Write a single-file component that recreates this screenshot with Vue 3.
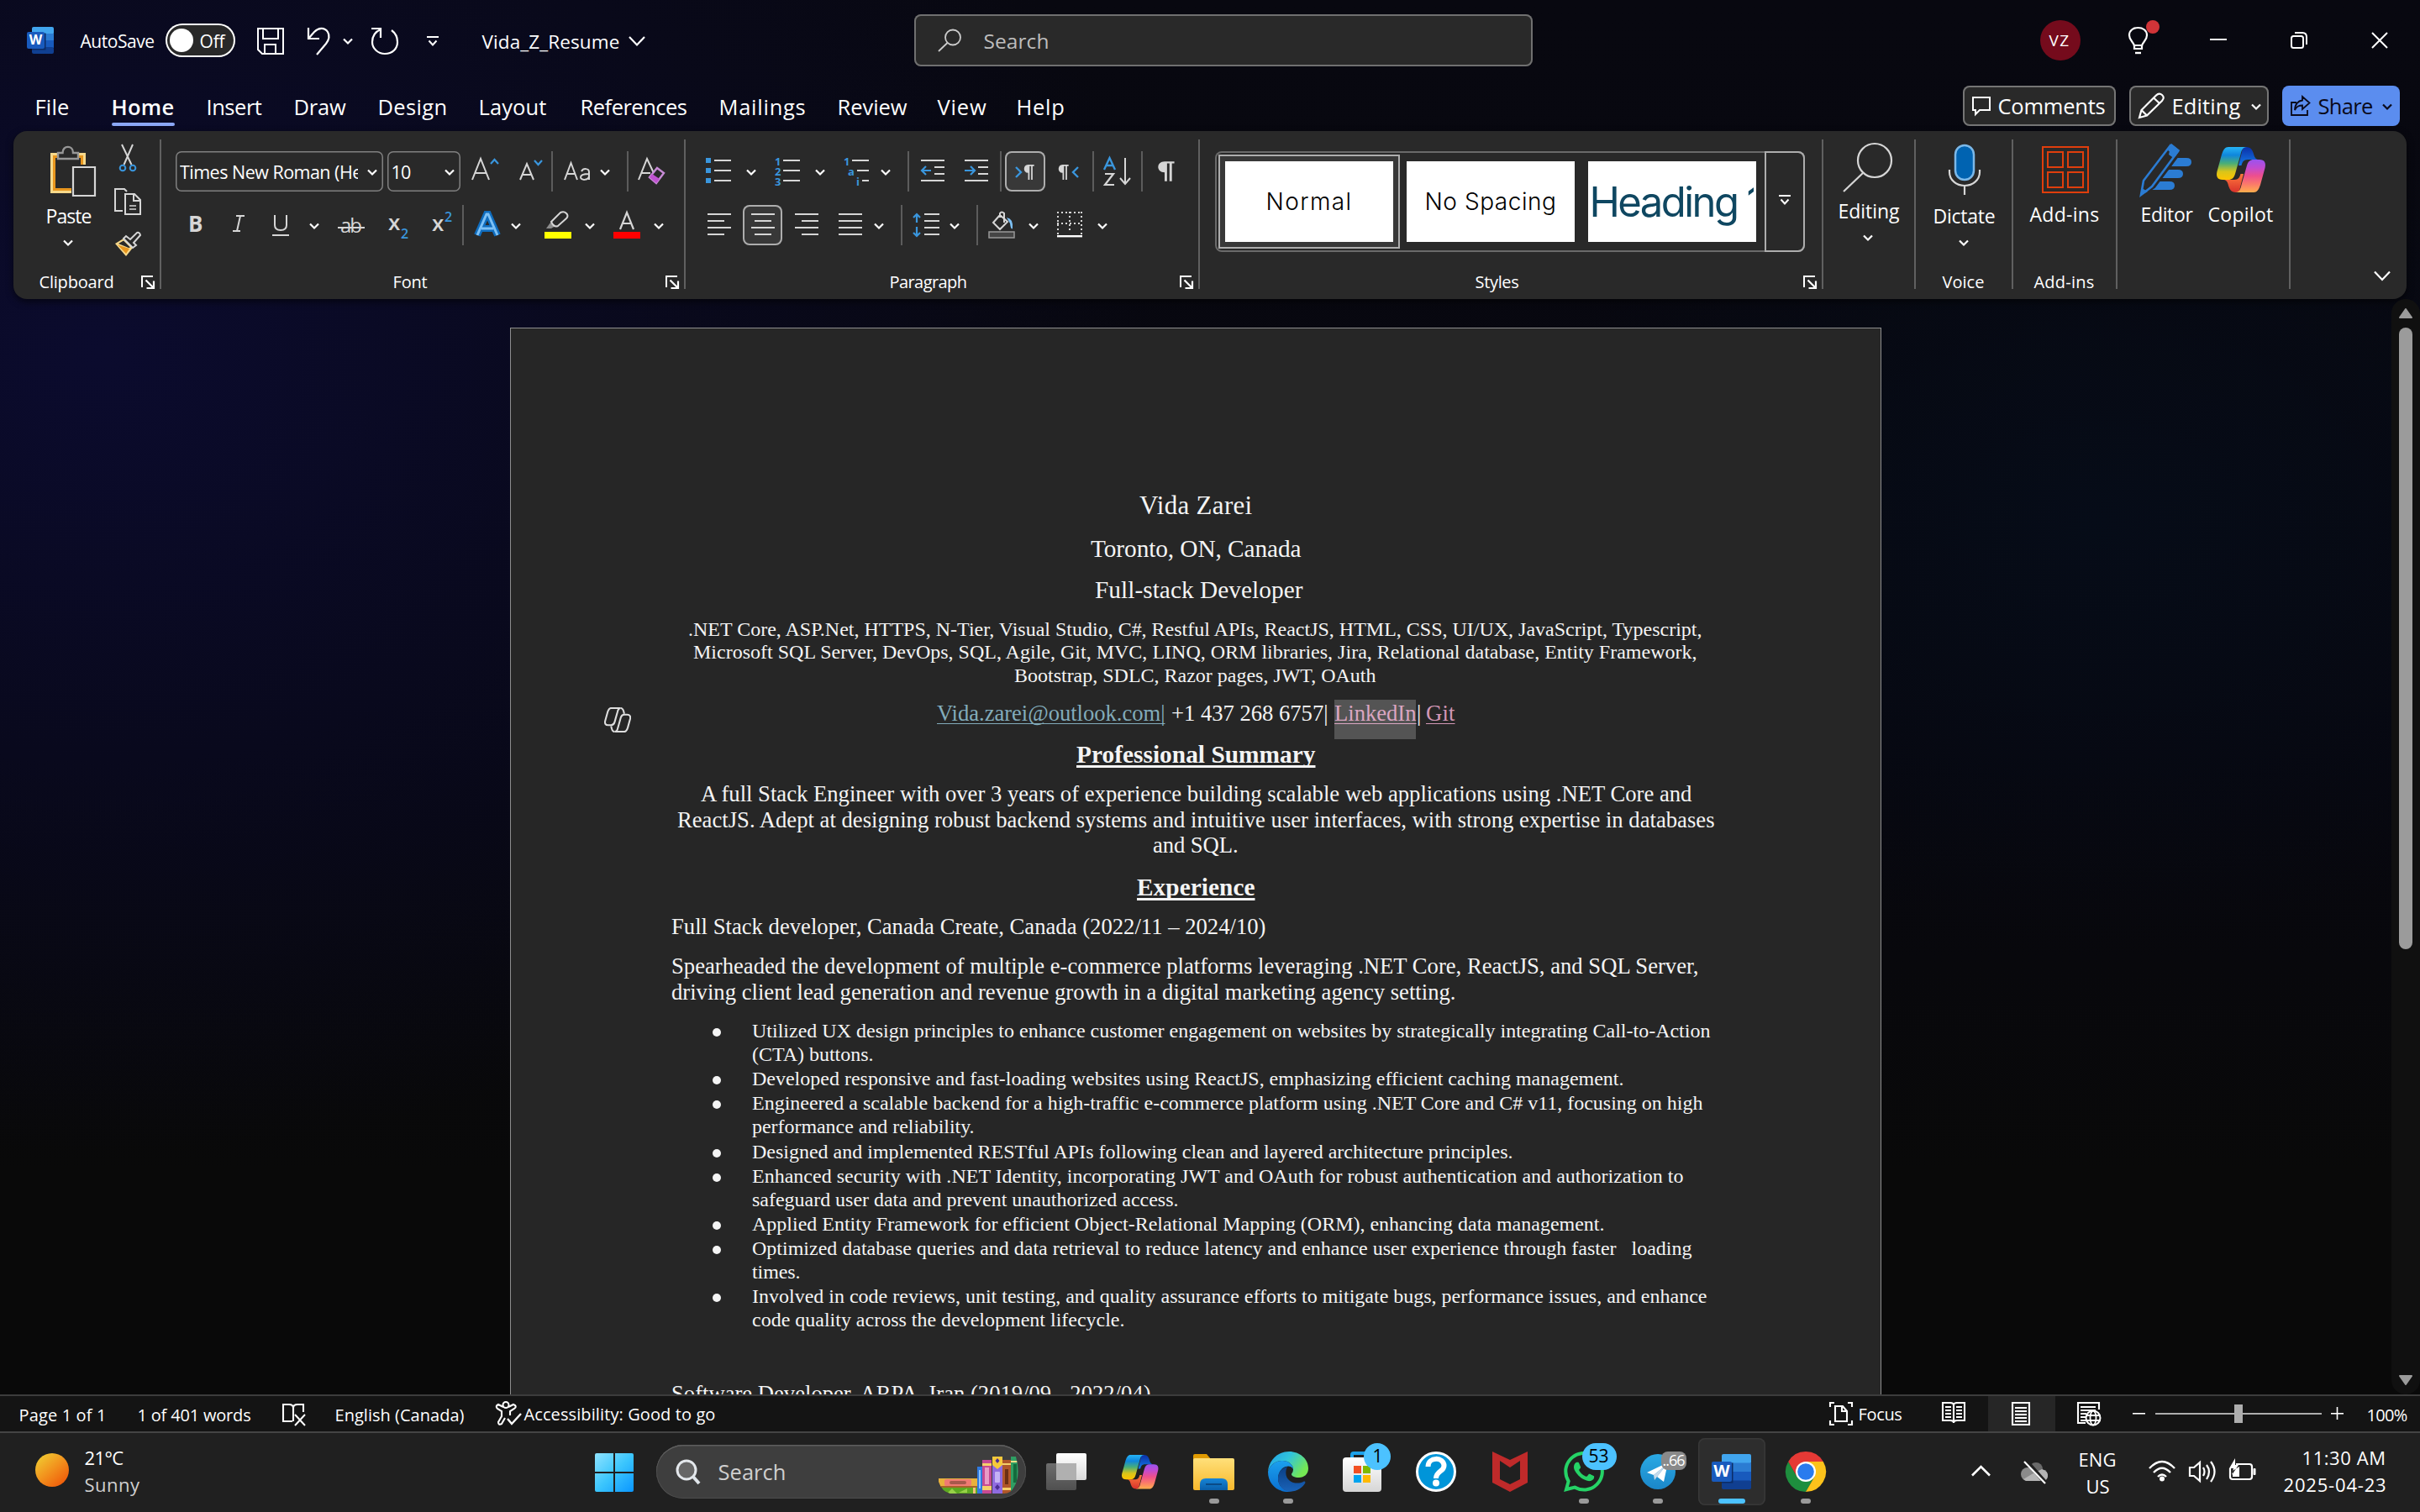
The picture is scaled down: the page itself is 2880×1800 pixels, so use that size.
<script setup>
import { h } from 'vue'

/* ---------- layout helpers: items flow left to right in flex strips ---------- */
const px = n => n + 'px'

function fit(el, width, slack = 2) {
  const natural = el.getBoundingClientRect().width
  const n = el.textContent.length
  if (n > 1) el.style.letterSpacing = ((width + slack - natural) / n).toFixed(3) + 'px'
  el.style.width = px(width)
}

const T = (x, x2, y, f, t, cls = '') => ({ k: 't', x: x - 1.5, w: x2 - x, y, f, t, cls })
const I = (x, y, w, hh, s) => ({ k: 'i', x, y, w, h: hh, s })
const B = (x, y, w, hh, cls, kids = []) => ({ k: 'b', x, y, w, h: hh, cls, kids })
const D = (x, y = 180) => B(x - 1, y, 2, 48, 'sep')

function place(items, ox, oy) {
  let cx = ox
  return items.map(it => {
    const style = { marginLeft: px(it.x - cx) }
    cx = it.x + it.w
    if (it.k === 't') {
      const shift = /inter/.test(it.cls) ? 0.364 : 0.388
      const drop = it.f <= 24.5 && it.f !== 22 ? 1 : 0
      style.marginTop = px(Math.round(it.y - oy - it.f * (0.6 + shift)) + drop)
      style.fontSize = px(it.f)
      style.lineHeight = px(it.f * 1.2)
      return h('span', { class: ['txt', it.cls], style, onVnodeMounted: v => fit(v.el, it.w) }, it.t)
    }
    style.marginTop = px(it.y - oy)
    style.width = px(it.w)
    style.height = px(it.h)
    if (it.k === 'i') return h('svg', { class: 'ico', style, viewBox: `0 0 ${it.w} ${it.h}`, innerHTML: it.s })
    return h('div', { class: ['box', it.cls], style }, place(it.kids, it.x, it.y))
  })
}
const Strip = p => h('div', { class: 'strip' }, place(p.items, p.ox || 0, p.oy || 0))
Strip.props = ['items', 'ox', 'oy']

/* ---------- icon drawings ---------- */
const L = '#d6d6d6', W = '#fff', BL = '#3a96dd'
const st = (d, c = L, w = 2, x = '') => `<path d="${d}" fill="none" stroke="${c}" stroke-width="${w}" ${x}/>`
const fl = (d, c, x = '') => `<path d="${d}" fill="${c}" ${x}/>`
const rc = (x, y, w, hh, c, r = 0) => `<rect x="${x}" y="${y}" width="${w}" height="${hh}" fill="${c}" rx="${r}"/>`
const tx = (x, y, f, c, t, e = '') => `<text x="${x}" y="${y}" font-size="${f}" fill="${c}" font-family="Open Sans, sans-serif" ${e}>${t}</text>`
const lg = (id, stops, e = 'x1="0" y1="0" x2="0" y2="1"') =>
  `<linearGradient id="${id}" ${e}>${stops.map((s, i) => `<stop offset="${i / (stops.length - 1)}" stop-color="${s}"/>`).join('')}</linearGradient>`
const chev = (x, y, c = W) => I(x, y, 12, 8, st('M1 1.5l5 5 5-5', c, 2.2))
const launch = x => I(x, 328, 16, 16, st('M1 14V1H14', W) + st('M5.500 5.500L14 14M15 6.500V15H6.500', W, 2.2))

const word = (w, hh, sx, sw, sy, sh, f) => {
  const q = hh / 4
  return rc(sx, 0, w - sx, q + 1, '#41a5ee', 2) + rc(sx, q, w - sx, q + 1, '#2b7cd3') + rc(sx, q * 2, w - sx, q + 1, '#185abd') +
    rc(sx, q * 3, w - sx, q, '#103f91', 2) + rc(sx, sy + 1.5, sw - sx + 1.5, sh, '#0b2c66') + rc(0, sy, sw, sh, '#185abd', 2) +
    tx(sw / 2, sy + sh * 0.77, f, W, 'W', 'text-anchor="middle" font-weight="700"')
}
const copA = 'M14 0H36C31 0 29.500 4 28.500 9L22 32C20.500 37 18 39 14 39H7C1 39-1 35 .5 29L6 9C8 3 10 0 14 0Z'
const copB = 'M35 0C41 0 43 4 44.500 10Q46 15 50 15H37C32 15 30.500 18 29.500 22L26 22L29.500 8C30.500 3 31 0 35 0Z'
const copilot = (id, s = 1) =>
  `<defs>${lg(id + 'a', ['#26b4f6', '#0f86dc', '#49ae78', '#d9c51a', '#ffc400'])}${lg(id + 'b', ['#0a2fa8', '#1479e6'])}` +
  `${lg(id + 'c', ['#ffae4c', '#fb7a6a', '#ee4f8d', '#c24bd0', '#9a53ee'])}${lg(id + 'd', ['#d8322c', '#ff7a3c'])}</defs>` +
  `<g transform="scale(${s})"><path d="${copB}" fill="url(#${id}b)"/><path d="${copB}" fill="url(#${id}d)" transform="rotate(180 29 27)"/>` +
  `<path d="${copA}" fill="url(#${id}a)"/><path d="${copA}" fill="url(#${id}c)" transform="rotate(180 29 27)"/></g>`

/* ---------- title bar ---------- */
const title = [
  I(32, 32, 32, 32, word(32, 32, 6, 21, 6, 20, 16)),
  T(97, 183, 57, 21, 'AutoSave'),
  B(197, 28, 83, 40, 'toggle', [B(202, 34, 28, 28, 'knob'), T(239, 267, 56.5, 21, 'Off')]),
  I(306, 33, 32, 32, st('M1 1H31V31H6L1 26Z', W) + st('M7 1V13H25V1M9 31V20H22V31M15 31', W)),
  I(365, 33, 29, 33, st('M2 0V13H15', W, 2.2) + st('M2 13L9 5C14 0 21-1 25 5C28 10 26 15 23 19L12 32', W, 2.2)),
  chev(408, 45),
  I(441, 32, 34, 34, st('M1 2H12V13', W, 2.2) + st('M12 3C5 6 2 12 2 18C2 26 9 32 17 32C26 32 32 26 32 18C32 12 29 7 25 4', W, 2.2)),
  I(508, 43, 14, 13, st('M0 1H14M2.500 5.500L7 10.500L11.500 5.500', W, 2)),
  T(575, 737, 57.5, 22.5, 'Vida_Z_Resume'),
  I(748, 43, 20, 12, st('M1 1L10 10.500L19 1', W, 2.2)),
  B(1088, 17, 736, 62, 'search', [
    I(1116, 34, 28, 28, '<circle cx="18" cy="10.500" r="9" fill="none" stroke="#ccc" stroke-width="1.8"/>' + st('M11.500 17L1 27', '#ccc', 1.8)),
    T(1172, 1248, 57.5, 24.5, 'Search', 'dim')
  ]),
  B(2428, 24, 48, 48, 'avatar', [T(2440, 2463, 54.5, 19, 'VZ')]),
  I(2532, 31, 26, 34, st('M8 24C8 19 2 18 2 11C2 5 7 2 12.500 2C18 2 23 5 23 11C23 18 17 19 17 24V27H8ZM8 23H17', W, 2.2) + st('M9 32H16', W, 2.4)),
  B(2554, 24, 16, 16, 'reddot'),
  I(2630, 46, 20, 2, rc(0, 0, 20, 2, W)),
  I(2726, 38, 20, 20, '<rect x="1" y="5" width="14" height="14" rx="2.500" fill="none" stroke="#fff" stroke-width="2"/>' + st('M5 1H14Q19 1 19 6V15', W, 2)),
  I(2822, 38, 20, 20, st('M1 1L19 19M19 1L1 19', W, 2))
]
const tabs = [
  T(43, 82, 137, 25.5, 'File'), T(134, 207, 137, 25.5, 'Home', 'semi'), T(247, 311, 137, 25.5, 'Insert'),
  T(351, 411, 137, 25.5, 'Draw'), T(451, 532, 137, 25.5, 'Design'), T(571, 650, 137, 25.5, 'Layout'),
  T(692, 817, 137, 25.5, 'References'), T(857, 959, 137, 25.5, 'Mailings'), T(998, 1079, 137, 25.5, 'Review'),
  T(1117, 1174, 137, 25.5, 'View'), T(1211, 1267, 137, 25.5, 'Help'),
  B(2336, 102, 182, 48, 'btn', [I(2347, 115, 22, 22, st('M1 1H21V16H9L4 21V16H1Z', W)), T(2379, 2505, 136, 25.5, 'Comments')]),
  B(2534, 102, 166, 48, 'btn', [
    I(2544, 110, 32, 32, st('M2 30L4.500 21L22 3.500Q25.500 0 29 3T29 10L11 27.500Z M19 6.500L26 13M4.500 21L11 27.500', W, 2.2)),
    T(2586, 2666, 136, 25.5, 'Editing'), chev(2679, 123)
  ]),
  B(2716, 102, 140, 48, 'share', [
    I(2726, 114, 24, 24, st('M7 8H1V23H20V17', '#0a0a1a', 1.8) + st('M14 1L22.500 8.500L14 16V11.500C9 11.500 7 13 5 17C5 10 9 6 14 5.500Z', '#0a0a1a', 1.8)),
    T(2760, 2823, 136, 25.5, 'Share', 'dark'), chev(2835, 123, '#0a0a1a')
  ])
]
const underline = [B(133, 146, 75, 4, 'under')]

/* ---------- ribbon ---------- */
const paste = [
  [I(60, 174, 54, 60,
    rc(0, 8, 42, 48, '#f7d98b') + rc(3, 11, 36, 42, '#e8961e') + rc(6, 14, 30, 36, '#292929') +
    fl('M8 16V8H14C14 -2 28 -2 28 8H34V16Z', '#292929') + st('M9 15V8H14.500C14.500-1.500 27-1.500 27 8H33V15Z', '#979797', 2.4) +
    rc(25, 22, 30, 40, '#292929') + st('M27 25H53V59H27Z', L, 2.2))],
  [T(56, 108, 266, 23, 'Paste')],
  [chev(75, 285)]
]
const clipTools = [
  I(140, 172, 24, 32, st('M5 0L16.500 24M18 0L7.500 24', L, 2) + `<circle cx="6" cy="28" r="3.300" fill="none" stroke="${BL}" stroke-width="2"/><circle cx="18" cy="28" r="3.300" fill="none" stroke="${BL}" stroke-width="2"/>`),
  I(136, 224, 32, 32, st('M10 27H1V1H12L15 4', L) + st('M13 7H24L31 14V31H13Z M23 7V15H31', L) + st('M18 21H26M18 25H26', L, 1.6)),
  I(136, 275, 32, 31, fl('M1 15L11 9L22 20L14 30Z', '#f7d98b') + fl('M4 16.500L18 21L14 27Z', '#e8961e') + fl('M5 15L11 11.500L19 19.500L17 20Z', '#292929') + st('M11 9L14 6L19 10L27 2Q30 1 31 5L23 14L26 17L22 20Z', L, 2))
]
const fontRow1 = [
  B(209, 180, 247, 48, 'combo', [B(214, 184, 212, 40, 'clip', [T(215.5, 528, 212, 21.5, 'Times New Roman (Headings CS)')]), chev(437, 201)]),
  B(461, 180, 87, 48, 'combo', [T(467, 488, 212, 21.5, '10'), chev(529, 201)]),
  I(560, 186, 34, 30, st('M2 28L12 3L22 28M6 20H18', L, 2) + st('M24 9L28.500 4L33 9', BL, 2.2)),
  I(616, 186, 30, 30, st('M3 28L11 9L19 28M6 22H16', L, 2) + st('M20 5L24.500 10L29 5', BL, 2.2)),
  D(657),
  I(670, 186, 34, 30, st('M2 28L9.500 8L17 28M5 21H14', L, 2) + st('M22 18C24 14 31 14 31 19V28M31 21C24 21 21 22 21 25C21 29 30 29 31 24', L, 2)),
  chev(714, 201), D(747),
  I(758, 186, 36, 34, st('M2 28L12 3L20 20M6 20H16', L, 2) + st('M15 25L24 14L32 20L23 32Z', '#c78bd6', 2.4) + fl('M15 25L18 21L27 27L23 32Z', '#c052d0'))
]
const fontRow2 = [
  I(223, 254, 20, 24, tx(1, 22, 26, L, 'B', 'font-weight="700" textLength="16"')),
  I(274, 254, 20, 24, st('M7 3H17M3 21H12M12 3L8 21', L, 2)),
  I(323, 254, 22, 28, st('M4 2V14Q4 20 11 20T18 14V2M1 26H21', L, 2)),
  chev(368, 265),
  I(402, 256, 32, 26, tx(3, 21, 24, L, 'ab', 'textLength="26"') + st('M0 15H32', L, 2)),
  I(462, 256, 26, 30, tx(0, 18, 26, L, 'x', 'font-weight="600"') + tx(15, 28, 16, BL, '2', 'font-weight="600"')),
  I(514, 250, 26, 30, tx(0, 25, 26, L, 'x', 'font-weight="600"') + tx(15, 14, 16, BL, '2', 'font-weight="600"')),
  D(551, 244),
  I(563, 250, 34, 34, st('M5 30L16 5H18L29 30M10 22H24', '#0f6cbd', 8) + st('M5 30L16 5H18L29 30M10 22H24', '#7cc0f5', 3)),
  chev(608, 265),
  I(647, 251, 34, 34, fl('M3 21L8 14L14 18L9 21Z', '#8c8c8c') + st('M9 13L20 2Q24 0 27 3T27 9L17 18Q12 20 9 13Z', L, 2) + rc(1, 25, 32, 8, '#ffff00')),
  chev(696, 265),
  I(729, 251, 34, 34, st('M9 22L17 2L25 22M12 15H22', L, 2.2) + rc(1, 25, 32, 8, '#ff0000')),
  chev(778, 265)
]
const fontLabel = [T(469, 508, 343, 20, 'Font'), launch(792)]
const num = (y, t, x = 0) => tx(x, y, 13, BL, t, 'font-weight="700"')
const pil = (x, c = L) => fl(`M${x + 5} 1H${x + 13}V3H${x + 11}V21H${x + 9}V3H${x + 7}V21H${x + 5}V12C${x - 2} 12 ${x - 2} 1 ${x + 5} 1Z`, c)
const paraRow1 = [
  I(840, 187, 30, 32, [1, 13, 25].map(y => rc(0, y, 6, 6, BL) + rc(10, y + 2, 20, 2, L)).join('')), chev(888, 201),
  I(922, 187, 30, 34, num(9.5, '1') + num(21.5, '2') + num(33.5, '3') + rc(10, 3, 20, 2, L) + rc(10, 15, 20, 2, L) + rc(10, 27, 20, 2, L)), chev(970, 201),
  I(1004, 187, 30, 34, num(9.5, '1') + num(21.5, 'a', 5) + num(33.5, 'i', 15) + rc(10, 3, 20, 2, L) + rc(16, 15, 14, 2, L) + rc(22, 27, 8, 2, L)), chev(1048, 201),
  D(1081),
  I(1096, 190, 28, 27, rc(0, 0, 28, 2, L) + rc(16, 8, 12, 2, L) + rc(16, 16, 12, 2, L) + rc(0, 24, 28, 2, L) + st('M12 13H2M6 8L1 13L6 18', BL, 2.2)),
  I(1148, 190, 28, 27, rc(0, 0, 28, 2, L) + rc(16, 8, 12, 2, L) + rc(16, 16, 12, 2, L) + rc(0, 24, 28, 2, L) + st('M0 13H11M7 8L12 13L7 18', BL, 2.2)),
  D(1191),
  B(1196, 180, 48, 48, 'on', [I(1208, 194, 26, 22, st('M1 5L7 11L1 17', BL, 2.4) + `<g transform="translate(11 1) scale(.9)">${pil(0)}</g>`)]),
  I(1260, 194, 26, 22, `<g transform="translate(0 1) scale(.9)">${pil(0)}</g>` + st('M23 5L17 11L23 17', BL, 2.4)),
  D(1301),
  I(1312, 186, 36, 36, st('M2 16L8.500 2L15 16M4.500 11H12.500', BL, 2.4) + st('M3 21H13L3 34H14', L, 2.2) + st('M27 2V33M21 26L27 33L33 26', L, 2)),
  D(1359),
  I(1378, 191, 22, 27, `<g transform="scale(1.450 1.180)">${pil(0.5)}</g>`)
]
const al = ws => ws.map(([x, w], i) => rc(x, 1 + i * 8, w, 2, L)).join('')
const paraRow2 = [
  I(842, 253, 28, 28, al([[0, 28], [0, 20], [0, 28], [0, 20]])),
  B(884, 244, 47, 48, 'on', [I(894, 253, 28, 28, al([[0, 28], [4, 20], [0, 28], [4, 20]]))]),
  I(946, 253, 28, 28, al([[0, 28], [8, 20], [0, 28], [8, 20]])),
  I(998, 253, 28, 28, al([[0, 28], [0, 28], [0, 28], [0, 28]])), chev(1040, 265),
  D(1073, 244),
  I(1086, 253, 32, 30, al([[14, 18], [14, 18], [14, 18], [14, 18]]) + st('M5 2V12M5 28V17M1 6L5 2L9 6M1 24L5 28L9 24', BL, 2.2)), chev(1130, 265),
  D(1163, 244),
  I(1176, 251, 32, 34, st('M14 22L6 14L14 5L22 12L23 13Z M14 8V3Q16 0 19 3V14', L, 2) + fl('M22 8Q30 9 29 21Q27 23 26 15Z', '#7cc0f5') + '<rect x="1" y="25" width="30" height="7" fill="#454545" stroke="#999" stroke-width="1.500"/>'), chev(1224, 265),
  I(1258, 251, 30, 32, st('M1 1V28M29 1V28M15 1V26', L, 2, 'stroke-dasharray="2 3"') + st('M0 2H30M0 15H30', L, 2, 'stroke-dasharray="2 3"') + rc(0, 29, 30, 2.4, W)), chev(1306, 265)
]
const paraLabel = [T(1060, 1150, 343, 20, 'Paragraph'), launch(1404)]
const gallery = [
  B(1446, 180, 702, 120, 'gallery', [
    B(1450, 184, 216, 112, 'picked', [B(1458, 192, 200, 96, 'card', [T(1508, 1609, 251, 28, 'Normal', 'inter')])]),
    B(1674, 192, 200, 96, 'card', [T(1697, 1852, 251, 28, 'No Spacing', 'inter')]),
    B(1890, 192, 200, 96, 'card head', [T(1893, 2067, 259.5, 49, 'Heading', 'inter teal'), T(2080, 2106, 259.5, 49, '1', 'inter teal')]),
    B(2100, 180, 48, 120, 'more', [I(2117, 232, 14, 13, st('M0 1H14M2.500 5.500L7 10.500L11.500 5.500', W, 2))])
  ])
]
const stylesLabel = [T(1757, 1807, 343, 20, 'Styles'), launch(2146)]
const bigs = [
  { x: 2171, w: 109, rows: [
    [I(2193, 169, 60, 60, `<circle cx="38" cy="22" r="20" fill="none" stroke="${L}" stroke-width="2.200"/>` + st('M24 37L1 59', L, 2.2))],
    [T(2189, 2260, 260, 23, 'Editing')], [chev(2217, 279)]] },
  { x: 2280, w: 116, rows: [
    [I(2318, 171, 40, 62, '<rect x="9" y="2" width="22" height="41" rx="11" fill="#0063b1" stroke="#7cb8e8" stroke-width="2.500"/>' + st('M2 31V34C2 43 10 50 20 50S38 43 38 34V31M20 50V61', L, 2.2))],
    [T(2302, 2374, 266, 23, 'Dictate')], [chev(2331, 285)]], label: [T(2313, 2361, 343, 20, 'Voice')] },
  { x: 2396, w: 124, rows: [
    [I(2430, 174, 56, 56, st('M1 1H55V55H1Z M7 7H25V25H7ZM31 7H49V25H31ZM7 31H25V49H7ZM31 31H49V49H31Z', '#e03e0c', 2))],
    [T(2417, 2498, 264, 23, 'Add-ins')], []], label: [T(2422, 2492, 343, 20, 'Add-ins')] },
  { x: 2520, w: 206, rows: [
    [I(2546, 170, 64, 64, fl('M44 18H56Q62 18 62 23T56 28H38ZM35 32H46Q52 32 52 37T46 42H25L29 36ZM22 46H36Q42 46 42 51T36 56H13Z', '#2b7cd3') +
      fl('M38 1L48 9L42 19L35 14Z', '#2b7cd3') + st('M37 4L47 12L17 52L2 62L5 44Z', '#292929', 5) + st('M37 3L46 10L15 52L2 62L5 45Z', '#2b7cd3', 2.6) + fl('M38 1L48 9L43 16L34 9ZM1 63L3 54L10 58Z', '#2b7cd3')),
    I(2638, 175, 58, 54, copilot('ra'))],
    [T(2549, 2609, 264, 23, 'Editor'), T(2629, 2705, 264, 23, 'Copilot')], []] }
]
const collapse = [I(2825, 322, 20, 13, st('M1 1.500L10 11L19 1.500', W, 2.2))]

/* ---------- document ---------- */
// [left, right, baseline, size, text, class]
const S = 24, M = 26.67
const rawLines = [
  [1356, 1490, 612, 31, 'Vida Zarei'],
  [1298, 1548, 662.5, 29.33, 'Toronto, ON, Canada'],
  [1303, 1550, 712, 29.33, 'Full-stack Developer'],
  [819, 2025, 757.5, S, '.NET Core, ASP.Net, HTTPS, N-Tier, Visual Studio, C#, Restful APIs, ReactJS, HTML, CSS, UI/UX, JavaScript, Typescript,'],
  [825, 2019, 784.5, S, 'Microsoft SQL Server, DevOps, SQL, Agile, Git, MVC, LINQ, ORM libraries, Jira, Relational database, Entity Framework,'],
  [1207, 1637, 812.5, S, 'Bootstrap, SDLC, Razor pages, JWT, OAuth'],
  [[1115, 1386, 'Vida.zarei@outlook.com|', 'mail'], [1394, 1580, '+1 437 268 6757|', ''], [1588, 1685, 'LinkedIn', 'link sel'], [1686, 1690, '|', ''], [1697, 1731, 'Git', 'link']],
  [1281, 1565, 907.5, 29.33, 'Professional Summary', 'hd'],
  [834, 2013, 954.5, M, 'A full Stack Engineer with over 3 years of experience building scalable web applications using .NET Core and'],
  [806, 2040, 985.5, M, 'ReactJS. Adept at designing robust backend systems and intuitive user interfaces, with strong expertise in databases'],
  [1372, 1473, 1015.5, M, 'and SQL.'],
  [1353, 1493, 1065.5, 29.33, 'Experience', 'hd'],
  [799, 1506, 1112.5, M, 'Full Stack developer, Canada Create, Canada (2022/11 – 2024/10)'],
  [799, 2021, 1159.5, M, 'Spearheaded the development of multiple e-commerce platforms leveraging .NET Core, ReactJS, and SQL Server,'],
  [799, 1732, 1190.5, M, 'driving client lead generation and revenue growth in a digital marketing agency setting.'],
  [895, 2035, 1235, S, 'Utilized UX design principles to enhance customer engagement on websites by strategically integrating Call-to-Action', 'dot'],
  [895, 1039, 1263, S, '(CTA) buttons.'],
  [895, 1932, 1292, S, 'Developed responsive and fast-loading websites using ReactJS, emphasizing efficient caching management.', 'dot'],
  [895, 2026, 1321, S, 'Engineered a scalable backend for a high-traffic e-commerce platform using .NET Core and C# v11, focusing on high', 'dot'],
  [895, 1159, 1349, S, 'performance and reliability.'],
  [895, 1800, 1379, S, 'Designed and implemented RESTful APIs following clean and layered architecture principles.', 'dot'],
  [895, 2003, 1408, S, 'Enhanced security with .NET Identity, incorporating JWT and OAuth for robust authentication and authorization to', 'dot'],
  [895, 1402, 1436, S, 'safeguard user data and prevent unauthorized access.'],
  [895, 1909, 1465, S, 'Applied Entity Framework for efficient Object-Relational Mapping (ORM), enhancing data management.', 'dot'],
  [895, 2013, 1494, S, 'Optimized database queries and data retrieval to reduce latency and enhance user experience through faster   loading', 'dot'],
  [895, 952, 1522, S, 'times.'],
  [895, 2031, 1551, S, 'Involved in code reviews, unit testing, and quality assurance efforts to mitigate bugs, performance issues, and enhance', 'dot'],
  [895, 1338, 1579.5, S, 'code quality across the development lifecycle.'],
  [799, 1369, 1668, M, 'Software Developer, ARPA, Iran (2019/09 - 2022/04)']
]
const PX = 608
let bottom = 391
const lines = rawLines.map(r => {
  const multi = Array.isArray(r[0])
  const f = multi ? M : r[3]
  const base = multi ? 858.5 : r[2]
  const top = Math.round(base - 12 - 0.3375 * f)
  const parts = multi ? r : [[r[0], r[1], r[4], r[5] || '']]
  let cx = PX
  const spans = parts.map(([a, b, t, cls]) => {
    const o = { t, cls, w: b - a, ml: a - cx }
    cx = b
    return o
  })
  const out = { f, mt: top - bottom, spans, multi, dot: r[5] === 'dot' }
  bottom = top + 24
  return out
})
const vFit = { mounted: (el, b) => fit(el, b.value, 0.5) }
const copOutline = `<g transform="translate(1 1) scale(.52)"><path d="${copA}" fill="none" stroke="#dedede" stroke-width="4"/><path d="${copA}" fill="none" stroke="#dedede" stroke-width="4" transform="rotate(180 29 27)"/>` +
  '<path d="M36 0Q42 0 44 13M22 54Q16 54 14 41" fill="none" stroke="#dedede" stroke-width="4"/></g>'

/* ---------- status bar ---------- */
const rowsOf = (x, w, n, y0 = 6) => Array.from({ length: n }, (_, i) => rc(x, y0 + i * 4, w, 2, W)).join('')
const status = [
  T(24, 126, 1691.5, 20, 'Page 1 of 1'), T(165, 298, 1691.5, 20, '1 of 401 words'),
  I(336, 1670, 28, 28, st('M12 22H1V2H8Q13 2 13 6Q13 2 18 2H25V11M13 5V22', W, 2.1) + st('M15 14L27 27M27 14L15 27', W, 2)),
  T(400, 552, 1691.5, 20, 'English (Canada)'),
  I(589, 1668, 32, 30, '<circle cx="13" cy="4.500" r="3.500" fill="none" stroke="#fff" stroke-width="2"/>' + st('M10 7L4 4Q0 6 3 9L8 12V18L4 25Q4 29 8 27L12 20M16 7L22 4Q27 6 23 9L18 12V17', W, 2.1) + st('M15 21L20 27L31 15', W, 2.4)),
  T(625, 851, 1691, 20, 'Accessibility: Good to go'),
  I(2177, 1669, 28, 28, st('M1 6V1H6M22 1H27V6M27 22V27H22M6 27H1V22', W, 2.1) + st('M7 5H16L21 11V23H7Z M15 5V11H21', W, 2.1)),
  T(2213, 2263, 1691, 20, 'Focus'),
  I(2311, 1668, 28, 28, st('M1 2H10Q14 2 14 5Q14 2 18 2H27V23H18Q14 23 14 26Q14 23 10 23H1ZM14 4V25', W, 2.1) + rowsOf(4, 7, 4) + rowsOf(17, 7, 4)),
  B(2366, 1662, 80, 42, 'viewon', [I(2394, 1669, 22, 28, st('M1 1H21V27H1Z', W, 2.1) + rowsOf(4, 14, 5))]),
  I(2472, 1669, 30, 29, st('M26 9V1H1V25H10', W, 2.1) + rowsOf(4, 18, 2, 5) + rowsOf(4, 7, 3, 13) + '<circle cx="19" cy="19" r="8.500" fill="#141414" stroke="#fff" stroke-width="2"/><ellipse cx="19" cy="19" rx="3.500" ry="8.500" fill="none" stroke="#fff" stroke-width="1.800"/>' + st('M10.500 16H27.500M10.500 22H27.500', W, 1.8)),
  I(2538, 1675, 15, 16, rc(0, 7, 15, 1.6, W)),
  B(2565, 1682, 198, 2, 'track', [B(2659, 1672, 10, 22, 'handle')]),
  I(2774, 1675, 15, 16, rc(0, 7, 15, 1.6, W) + rc(6.700, 0, 1.6, 15, W)),
  T(2818, 2864, 1691.5, 20, '100%')
]

/* ---------- taskbar ---------- */
const dot = (x, y = 1784) => B(x, y, 12, 6, 'rundot')
const win = `<defs>${lg('wn', ['#8fe3ff', '#3cc6fd', '#0a96ff'], 'gradientUnits="userSpaceOnUse" x1="0" y1="0" x2="46" y2="46"')}</defs>` +
  '<path d="M2 0H22V22H0V2Q0 0 2 0ZM24 0H44Q46 0 46 2V22H24ZM0 24H22V46H2Q0 46 0 44ZM24 24H46V44Q46 46 44 46H24Z" fill="url(#wn)"/>'
const books = '<clipPath id="bk"><path d="M0 0H92Q98 22 90 36Q86 44 78 44H14Q4 42 0 30Z"/></clipPath><g clip-path="url(#bk)">' +
  rc(0, 26, 46, 10, '#e8b13c') + rc(7, 27, 32, 8, '#f07a72', 2) + rc(13, 29, 20, 4, '#a8584c', 2) + rc(0, 35, 46, 2, '#a5642a') +
  rc(0, 37, 46, 7, '#5da821') + fl('M10 44L16 38L22 44ZM24 43L34 38V43Z', '#97d148') + rc(41, 37, 3, 7, '#f2c078') +
  rc(46, 12, 6, 32, '#2f7ae0') + rc(48, 16, 2, 22, '#8bc2ff') +
  rc(52, 4, 11, 40, '#c64a94') + rc(52, 8, 11, 3, '#f5cf6a') + rc(55, 13, 5, 20, '#e99bc6') + rc(52, 35, 11, 5, '#f5cf6a') +
  rc(64, 0, 12, 44, '#8f6be0') + rc(64, 0, 12, 10, '#f6c93b') + fl('M64 10L70 15L76 10Z', '#f6c93b') + fl('M70 2L72.500 5L70 8L67.500 5Z', '#4c2e94') + rc(67, 18, 6, 13, '#c5b1f5', 1) + fl('M70 33L73 36.500L70 40L67 36.500Z', '#4c2e94') +
  rc(76, 4, 10, 40, '#b0572a') + rc(76, 8, 10, 2, '#f5cf6a') + rc(79, 15, 4, 18, '#6b2f14') + rc(76, 37, 10, 3, '#f5cf6a') +
  rc(86, 0, 10, 44, '#2f9e63') + rc(86, 5, 10, 2, '#f5e08a') + rc(89, 9, 4, 22, '#136b3c') + '</g>'
const edge = `<defs>${lg('e1', ['#1e9ee8', '#31c4dc', '#74e854'], 'x1="0" y1="0" x2="1" y2=".5"')}${lg('e2', ['#1ba0ee', '#0a6fd0'])}${lg('e3', ['#0a3f86', '#1a63b8'])}</defs>` +
  fl('M0 24C1 10 12 0 25 0C38 0 48 9 48 20C48 27 43 31 37 31C31 31 28 29 28 27C28 26 30 25 30 21C30 16 25 11 17 11C8 11 2 17 0 24Z', 'url(#e1)') +
  fl('M0 24C2 17 8 11 17 11C25 11 30 16 30 21C28 17 24 17 21 18C15 20 12 26 12 32C12 41 19 47 27 47.800Q25 48 24 48C10 48 0 38 0 24Z', 'url(#e2)') +
  fl('M23 18C15 20 12 26 12 32C12 41 19 48 27 47.800C35 47 41 43 44 38C45 36 44 35 42 36C32 41 16 34 23 18Z', 'url(#e3)')
const wa = 'M17.472 14.382c-.297-.149-1.758-.867-2.03-.967-.273-.099-.471-.148-.67.15-.197.297-.767.966-.94 1.164-.173.199-.347.223-.644.075-.297-.15-1.255-.463-2.39-1.475-.883-.788-1.48-1.761-1.653-2.059-.173-.297-.018-.458.13-.606.134-.133.298-.347.446-.52.149-.174.198-.298.298-.497.099-.198.05-.371-.025-.52-.075-.149-.669-1.612-.916-2.207-.242-.579-.487-.5-.669-.51-.173-.008-.371-.01-.57-.01-.198 0-.52.074-.792.372-.272.297-1.04 1.016-1.04 2.479 0 1.462 1.065 2.875 1.213 3.074.149.198 2.096 3.2 5.077 4.487.709.306 1.262.489 1.694.625.712.227 1.36.195 1.871.118.571-.085 1.758-.719 2.006-1.413.248-.694.248-1.289.173-1.413-.074-.124-.272-.198-.57-.347m-5.421 7.403h-.004a9.87 9.87 0 01-5.031-1.378l-.361-.214-3.741.982.998-3.648-.235-.374a9.86 9.86 0 01-1.51-5.26c.001-5.45 4.436-9.884 9.888-9.884 2.64 0 5.122 1.03 6.988 2.898a9.825 9.825 0 012.893 6.994c-.003 5.45-4.437 9.884-9.885 9.884m8.413-18.297A11.815 11.815 0 0012.05 0C5.495 0 .16 5.335.157 11.892c0 2.096.547 4.142 1.588 5.945L.057 24l6.305-1.654a11.882 11.882 0 005.683 1.448h.005c6.554 0 11.89-5.335 11.893-11.893a11.821 11.821 0 00-3.48-8.413z'

const weatherIcon = [I(42, 1730, 40, 40, `<defs>${lg('sn', ['#f0c830', '#f2941e', '#f0600c'], 'x1=".1" y1=".1" x2=".8" y2=".9"')}</defs><circle cx="20" cy="20" r="20" fill="url(#sn)"/>`)]
const weatherA = [T(102, 146, 1744, 22, '21°C')]
const weatherB = [T(102, 166, 1776, 22, 'Sunny', 'gray')]
const apps = [
  I(708, 1730, 46, 46, win),
  B(781, 1720, 440, 64, 'pill', [
    I(804, 1737, 30, 31, '<circle cx="13" cy="13" r="11" fill="#666" stroke="#e4e8ec" stroke-width="3"/>' + st('M20 20L28 29', '#dfe5ea', 4)),
    T(856, 935, 1762.5, 25.5, 'Search', 'gray'), I(1117, 1734, 96, 44, books)
  ]),
  I(1245, 1730, 48, 44, `<defs>${lg('tv', ['#fff', '#d9d9d9'])}${lg('tw', ['#6e6e6e', '#505050'])}</defs>` + rc(12, 0, 36, 32, 'url(#tv)', 2) + rc(0, 12, 36, 32, 'url(#tw)', 2) + rc(12, 12, 24, 20, '#b0b0b0')),
  I(1335, 1732, 44, 40, copilot('tb', 0.75)),
  I(1420, 1731, 49, 44, `<defs>${lg('fd', ['#ffe07a', '#f8b82c'])}${lg('fe', ['#1685d8', '#0a5ea8'])}</defs>` + fl('M0 2Q0 0 2 0H16L21 6H30V14H0Z', '#e09a00') + rc(0, 5, 49, 38, 'url(#fd)', 2) + fl('M8 43V36Q8 29 15 29H34Q41 29 41 36V43Z', 'url(#fe)') + rc(15, 35, 19, 2, '#0a4a86')),
  I(1509, 1728, 48, 48, edge),
  I(1598, 1728, 46, 48, `<defs>${lg('ms', ['#ffffff', '#d6d6d6'])}</defs>` + st('M11 12V4Q11 2 13 2H34V12', '#1ea2ea', 4) + rc(0, 7, 46, 41, 'url(#ms)', 4) + rc(13, 17, 9, 9, '#f25022') + rc(24, 17, 9, 9, '#7fba00') + rc(13, 28, 9, 9, '#00a4ef') + rc(24, 28, 9, 9, '#ffb900')),
  B(1623, 1718, 32, 32, 'badge', [T(1635, 1645, 1740.5, 21, '1')]),
  I(1685, 1728, 48, 48, '<circle cx="24" cy="24" r="22.500" fill="#0095d9" stroke="#fff" stroke-width="3"/>' + st('M14.500 18C14.500 6 33.500 6 33.500 17C33.500 24 24 23 24 32', W, 6) + '<circle cx="24" cy="37.500" r="4" fill="#fff"/>'),
  I(1776, 1728, 42, 48, '<path fill-rule="evenodd" fill="#bf2a2a" d="M0 0L21 10L42 0V37L21 48L0 37ZM9 11V33L21 39L33 33V11L21 19Z"/>'),
  I(1861, 1728, 48, 48, `<g transform="scale(2)">${fl(wa, '#25d366')}</g>`),
  B(1883, 1718, 41, 32, 'badge', [T(1892, 1914, 1740.5, 21, '53')]),
  I(1952, 1731, 42, 42, `<defs>${lg('tg', ['#2aa9e4', '#1b87c9'])}</defs><circle cx="21" cy="21" r="21" fill="url(#tg)"/>` + fl('M8 22L33 10L28 33L20 27L31 13L16 25Z', W) + fl('M16 25L31 13L20 27L17 31Z', '#c8daea')),
  B(1977, 1728, 30, 22, 'count', [T(1980, 2004, 1744.5, 18, '..66')]),
  B(2021, 1712, 80, 80, 'active', [I(2037, 1731, 47, 42, word(47, 42, 12, 24, 9, 24, 20))]),
  I(2125, 1728, 48, 48, fl('M3.200 12A24 24 0 0 0 24 48L34.400 30L24 24L13.600 30Z', '#1e8e3e') + fl('M24 12H44.800A24 24 0 0 1 24 48L34.400 30Z', '#fcc21b') + fl('M3.200 12A24 24 0 0 1 44.800 12H24L13.600 30Z', '#e53935') + '<circle cx="24" cy="24" r="12" fill="#fff"/><circle cx="24" cy="24" r="9.800" fill="#2a7bee"/>')
]
const running = [dot(1439), dot(1527), dot(1879), dot(1967), B(2045, 1784, 32, 6, 'actbar'), dot(2143)]
const tray = [
  I(2346, 1744, 23, 14, st('M1 12.500L11.500 2L22 12.500', W, 2.6)),
  I(2404, 1739, 34, 28, '<circle cx="19" cy="10" r="8" fill="#6a6a6a"/><circle cx="9" cy="16" r="8" fill="#8a8a8a"/>' + fl('M4 22L14 16L26 10Q34 12 33 19Q32 24 27 24H7Z', '#b4b4b4') + st('M8 1L31 27', '#202020', 5) + st('M5 1L30 27', W, 2.2))
]
const langA = [T(2475, 2518, 1745.5, 22, 'ENG')]
const langB = [T(2484, 2510, 1777.5, 22, 'US')]
const tray2 = [
  I(2556, 1738, 34, 26, st('M2 10Q17-6 32 10M7 15Q17 4.500 27 15M12 20Q17 15 22 20', W, 2.4) + '<circle cx="17" cy="22.500" r="3" fill="#fff"/>'),
  I(2605, 1738, 33, 28, st('M1 9H6L13 3V25L6 19H1Z', W, 2.2) + st('M17 9Q20 14 17 19M21 6Q27 14 21 23M26 2Q35 14 26 26', W, 2.2)),
  I(2652, 1736, 35, 28, st('M9 7H25Q28 7 28 10V22Q28 25 25 25H5Q2 25 2 22V12', W, 2.2) + rc(29.500, 12, 3, 8, W, 1) + fl('M5 22V15L13 10V22ZM8 0L1 12H6L4 20L12 8H8Z', W))
]
const clockA = [T(2741, 2839, 1744, 22, '11:30 AM')]
const clockB = [T(2719, 2840, 1776, 22, '2025-04-23')]
</script>

<template>
  <div class="window">
    <header class="titlebar"><Strip :items="title" :ox="0" :oy="0" /></header>
    <nav class="tabs">
      <Strip class="tabrow" :items="tabs" :ox="0" :oy="96" />
      <Strip :items="underline" :ox="0" :oy="146" />
    </nav>

    <section class="ribbon">
      <div class="group g-clip">
        <div class="top">
          <div class="col paste">
            <Strip class="r1" :items="paste[0]" :ox="16" :oy="166" />
            <Strip class="r2" :items="paste[1]" :ox="16" :oy="238" />
            <Strip :items="paste[2]" :ox="16" :oy="276" />
          </div>
          <div class="col">
            <Strip class="r3" :items="[clipTools[0]]" :ox="124" :oy="166" />
            <Strip class="r3" :items="[clipTools[1]]" :ox="124" :oy="214" />
            <Strip :items="[clipTools[2]]" :ox="124" :oy="262" />
          </div>
        </div>
        <Strip :items="[T(48, 135, 343, 20, 'Clipboard'), launch(168)]" :ox="16" :oy="310" />
      </div>
      <div class="group g-font">
        <Strip class="ra" :items="fontRow1" :ox="192" :oy="166" />
        <Strip class="rb" :items="fontRow2" :ox="192" :oy="236" />
        <Strip :items="fontLabel" :ox="192" :oy="310" />
      </div>
      <div class="group g-para">
        <Strip class="ra" :items="paraRow1" :ox="816" :oy="166" />
        <Strip class="rb" :items="paraRow2" :ox="816" :oy="236" />
        <Strip :items="paraLabel" :ox="816" :oy="310" />
      </div>
      <div class="group g-styles">
        <Strip class="top" :items="gallery" :ox="1428" :oy="166" />
        <Strip :items="stylesLabel" :ox="1428" :oy="310" />
      </div>
      <div v-for="g in bigs" :key="g.x" class="group" :style="{ width: g.w + 'px' }">
        <Strip class="r1" :items="g.rows[0]" :ox="g.x" :oy="166" />
        <Strip class="r2" :items="g.rows[1]" :ox="g.x" :oy="238" />
        <Strip class="r4" :items="g.rows[2]" :ox="g.x" :oy="276" />
        <Strip v-if="g.label" :items="g.label" :ox="g.x" :oy="310" />
      </div>
      <div class="group rest"><Strip :items="collapse" :ox="2726" :oy="166" /></div>
    </section>

    <main class="canvas">
      <article class="page">
        <div v-for="(l, i) in lines" :key="i" class="line" :style="{ marginTop: l.mt + 'px', fontSize: l.f + 'px' }">
          <i v-if="l.dot" class="bullet"></i>
          <svg v-if="l.multi" class="cop" viewBox="0 0 32 30" v-html="copOutline"></svg>
          <span
            v-for="(s, j) in l.spans"
            :key="j"
            v-fit="s.w"
            class="run"
            :class="s.cls"
            :style="{ marginLeft: s.ml + 'px' }"
          >{{ s.t }}</span>
        </div>
      </article>
      <aside class="scroll">
        <svg width="16" height="12" viewBox="0 0 16 12"><path d="M8 1L15 11H1Z" fill="#9b9b9b" stroke="#9b9b9b" stroke-linejoin="round" stroke-width="2" /></svg>
        <div class="thumb"></div>
        <svg class="dn" width="16" height="12" viewBox="0 0 16 12"><path d="M8 11L15 1H1Z" fill="#9b9b9b" stroke="#9b9b9b" stroke-linejoin="round" stroke-width="2" /></svg>
      </aside>
    </main>

    <footer class="status"><Strip :items="status" :ox="0" :oy="1662" /></footer>

    <footer class="taskbar">
      <div class="weather">
        <Strip class="wi" :items="weatherIcon" :ox="0" :oy="1706" />
        <div><Strip class="half" :items="weatherA" :ox="90" :oy="1706" /><Strip :items="weatherB" :ox="90" :oy="1752" /></div>
      </div>
      <div class="apps">
        <Strip class="approw" :items="apps" :ox="700" :oy="1706" />
        <Strip :items="running" :ox="700" :oy="1784" />
      </div>
      <div class="tray">
        <Strip class="t1" :items="tray" :ox="2300" :oy="1706" />
        <div class="t2"><Strip class="half" :items="langA" :ox="2460" :oy="1706" /><Strip :items="langB" :ox="2460" :oy="1752" /></div>
        <Strip class="t3" :items="tray2" :ox="2540" :oy="1706" />
        <div><Strip class="half" :items="clockA" :ox="2700" :oy="1706" /><Strip :items="clockB" :ox="2700" :oy="1752" /></div>
      </div>
    </footer>
  </div>
</template>

<style scoped>
.window {
  width: 2880px;
  height: 1800px;
  display: flex;
  flex-direction: column;
  overflow: hidden;
  color: #fff;
  font-family: 'Open Sans', 'Noto Sans', sans-serif;
  background:
    radial-gradient(ellipse 1250px 950px at 120px 420px, #0b0b2e 0%, rgba(10, 10, 36, 0.75) 45%, rgba(8, 8, 16, 0) 100%),
    radial-gradient(ellipse 700px 500px at 2500px 620px, #060c18, rgba(6, 10, 18, 0)),
    linear-gradient(#080810 0, #07070f 900px, #090909 1400px);
}
.titlebar { height: 96px; }
.tabs { height: 60px; }
.tabrow { height: 50px; }
.ribbon {
  height: 200px;
  margin: 0 16px;
  background: #292929;
  border-radius: 16px;
  display: flex;
  box-shadow: 0 3px 8px rgba(0, 0, 0, 0.6);
}
.group {
  box-sizing: border-box;
  height: 178px;
  margin-top: 10px;
  border-right: 2px solid #606060;
  display: flex;
  flex-direction: column;
  flex-shrink: 0;
}
.g-clip { width: 176px; }
.g-font { width: 624px; }
.g-para { width: 612px; }
.g-styles { width: 742px; margin-right: 1px; }
.rest { width: 138px; border: 0; }
.top { height: 144px; display: flex; flex-shrink: 0; }
.paste { width: 108px; }
.r1 { height: 72px; }
.r2 { height: 38px; }
.r3 { height: 48px; }
.r4 { height: 34px; }
.ra { height: 70px; }
.rb { height: 74px; }

.canvas { height: 1304px; display: flex; justify-content: space-between; overflow: hidden; }
.page {
  width: 1632px;
  height: 1400px;
  margin: 34px 0 0 607px;
  border: 1px solid #8e8e8e;
  box-sizing: border-box;
  background: #262626;
  color: #f4f4f4;
  font-family: 'Liberation Serif', 'Times New Roman', serif;
}
.line { position: relative; display: flex; height: 24px; line-height: 24px; }
.run { white-space: pre; flex-shrink: 0; display: block; }
.bullet { position: absolute; left: 240px; top: 9px; width: 10px; height: 10px; border-radius: 50%; background: #f4f4f4; }
.cop { position: absolute; left: 111px; top: 5px; width: 32px; height: 30px; }
.hd { font-weight: 700; text-decoration: underline; text-decoration-thickness: 3px; text-underline-offset: 3px; text-decoration-skip-ink: none; }
.mail { color: #82acbb; text-decoration: underline; text-decoration-thickness: 1px; text-underline-offset: 3px; text-decoration-skip-ink: none; }
.link { color: #d297b6; text-decoration: underline; text-decoration-thickness: 1px; text-underline-offset: 3px; text-decoration-skip-ink: none; }
.sel { background: #545454; color: #dba6c2; height: 47px; margin-top: -4px; padding-top: 0; line-height: 32px; }

.scroll { width: 34px; display: flex; flex-direction: column; align-items: center; background: #101010; border-radius: 17px; }
.scroll svg { margin-top: 11px; flex-shrink: 0; }
.thumb { width: 16px; height: 740px; margin-top: 11px; border-radius: 8px; background: #9b9b9b; flex-shrink: 0; }
.scroll .dn { margin-top: 507px; }

.status { height: 46px; box-sizing: border-box; border-top: 2px solid #3c3c3c; border-bottom: 2px solid #444; background: #141414; }
.taskbar { height: 94px; background: #202020; display: flex; }
.weather { width: 700px; display: flex; }
.wi { width: 90px; }
.half { height: 46px; }
.apps { width: 1600px; }
.approw { height: 78px; }
.tray { display: flex; }
.t1 { width: 160px; }
.t2 { width: 80px; }
.t3 { width: 160px; }
</style>

<style>
html, body { margin: 0; background: #08080f; }
.strip { display: flex; align-items: flex-start; flex-shrink: 0; }
.strip .txt { display: block; flex-shrink: 0; white-space: pre; }
.strip .ico { display: block; flex-shrink: 0; overflow: visible; }
.strip .box { display: flex; align-items: flex-start; flex-shrink: 0; box-sizing: border-box; }
.strip .semi { font-weight: 600; }
.strip .dim { color: #bdbdbd; }
.strip .gray { color: #cfcfcf; }
.strip .dark { color: #0a0a1a; }
.strip .inter { font-family: Inter, 'Open Sans', sans-serif; font-weight: 300; color: #000; }
.strip .teal { color: #0f4761; font-weight: 400; }
.strip .sep { background: #5c5c5c; }
.strip .toggle { border-radius: 20px; background: #292929; box-shadow: inset 0 0 0 2px #fff; }
.strip .knob { border-radius: 50%; background: #fff; }
.strip .search { border-radius: 8px; background: #292929; box-shadow: inset 0 0 0 2px #707070; }
.strip .avatar { border-radius: 50%; background: #750b1c; }
.strip .reddot { border-radius: 50%; background: #d13438; }
.strip .btn { border-radius: 8px; background: #292929; box-shadow: inset 0 0 0 2px #757575; }
.strip .share { border-radius: 8px; background: #5b8def; }
.strip .under { border-radius: 2px; background: #8ba7f5; }
.strip .combo { border-radius: 7px; box-shadow: inset 0 0 0 1.5px #808080; }
.strip .clip { overflow: hidden; }
.strip .on { border-radius: 8px; background: #383838; box-shadow: inset 0 0 0 2px #adadad; }
.strip .gallery { border-radius: 8px; box-shadow: inset 0 0 0 2px #6a6a6a; }
.strip .picked { background: #383838; box-shadow: inset 0 0 0 2px #adadad; }
.strip .card { background: #fff; overflow: hidden; }
.strip .head { border-right: 3px solid #fff; }
.strip .more { border-radius: 0 8px 8px 0; box-shadow: inset 0 0 0 2px #adadad; }
.strip .viewon { background: #262626; }
.strip .track { background: #adadad; }
.strip .handle { background: #adadad; }
.strip .pill { border-radius: 32px; background: #3e3e3e; box-shadow: inset 0 1.5px 0 #5e5e5e, inset 0 0 0 1px #4c4c4c; }
.strip .badge { border-radius: 16px; background: #4cc2ff; color: #000; }
.strip .count { border-radius: 8px; background: #8a8a8a; }
.strip .active { border-radius: 8px; background: #2d2d2d; box-shadow: inset 0 0 0 1.5px #383838; }
.strip .rundot { border-radius: 3px; background: #9a9a9a; }
.strip .actbar { border-radius: 3px; background: #4cc2ff; }
</style>
